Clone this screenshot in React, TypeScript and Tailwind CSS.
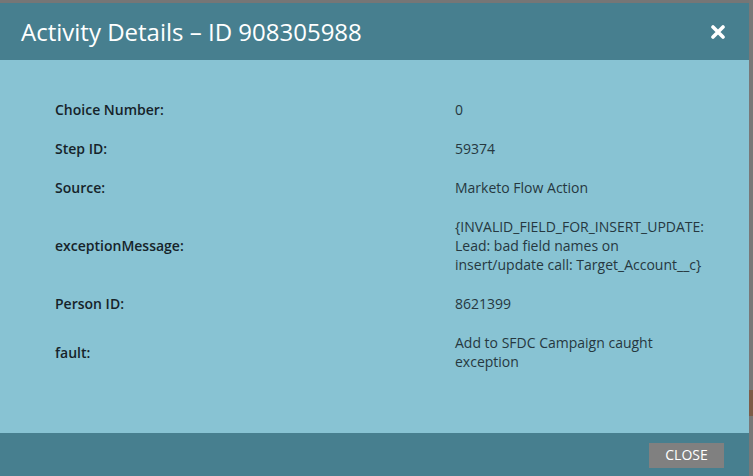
const rows: { label: string; value: string }[] = [
  { label: "Choice Number:", value: "0" },
  { label: "Step ID:", value: "59374" },
  { label: "Source:", value: "Marketo Flow Action" },
  {
    label: "exceptionMessage:",
    value:
      "{INVALID_FIELD_FOR_INSERT_UPDATE: Lead: bad field names on insert/update call: Target_Account__c}",
  },
  { label: "Person ID:", value: "8621399" },
  { label: "fault:", value: "Add to SFDC Campaign caught exception" },
];

const App = () => {
  return (
    <div
      className="w-[753px] h-[476px] flex bg-[#767676] overflow-hidden"
      style={{ fontFamily: '"Open Sans", "Noto Sans", sans-serif' }}
    >
      <div className="flex-1 flex flex-col mt-[3px]">
        <div className="h-[57px] bg-[#477f8f] flex items-center justify-between pl-[21px] pr-[24px]">
          <h1 className="text-[24px] text-white leading-none">
            Activity Details – ID 908305988
          </h1>
          <button className="text-white">
            <svg width="14" height="14" viewBox="0 0 14 14">
              <path
                d="M2 2 L12 12 M12 2 L2 12"
                stroke="white"
                strokeWidth="3.6"
                strokeLinecap="round"
              />
            </svg>
          </button>
        </div>
        <div className="flex-1 bg-[#88c3d3] pt-[40px] pl-[55px]">
          <div className="grid grid-cols-[400px_252px] gap-y-[20px] text-[14px] leading-[19px]">
            {rows.map((r) => (
              <div key={r.label} className="contents">
                <div className="font-semibold text-[#16232a] self-center">
                  {r.label}
                </div>
                <div className="text-[#26383f] self-center">{r.value}</div>
              </div>
            ))}
          </div>
        </div>
        <div className="h-[43px] bg-[#477f8f] flex items-center justify-end pr-[25px] pt-[1px]">
          <button className="w-[75px] h-[25px] bg-[#808080] text-white text-[14px] leading-none">
            CLOSE
          </button>
        </div>
      </div>
      <div className="w-[4px] flex flex-col">
        <div className="h-[390px] bg-[#787878]" />
        <div className="h-[26px] bg-[#7d5c47]" />
        <div className="flex-1 bg-[#787878]" />
      </div>
    </div>
  );
};

export default App;
